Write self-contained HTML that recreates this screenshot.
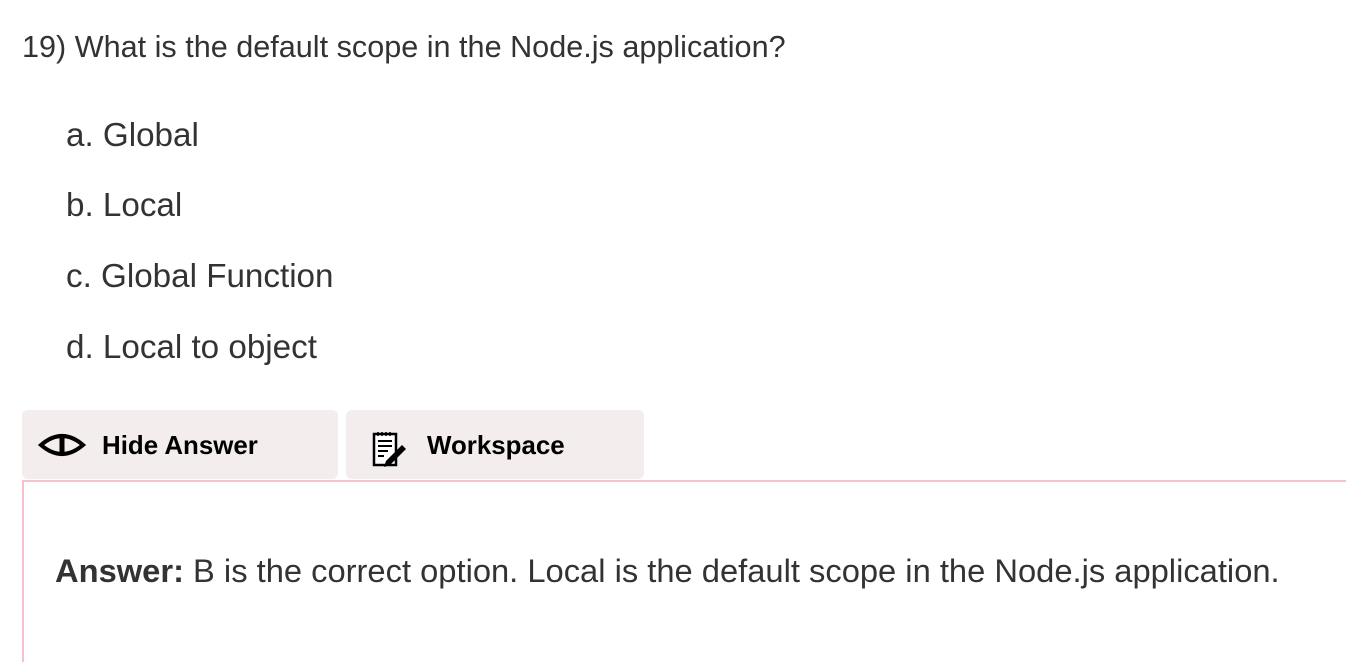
<!DOCTYPE html>
<html><head><meta charset="utf-8"><style>
body{margin:0;width:1346px;height:644px;overflow:hidden;background:#fff;font-family:"Liberation Sans",Arial,sans-serif;color:#333;position:relative}
.q{position:absolute;left:22px;top:30px;font-size:30.6px;white-space:nowrap}
.o{position:absolute;left:66px;font-size:33.2px;white-space:nowrap}
.btn{position:absolute;top:410px;height:69px;background:#f3eded;border-radius:6px;font-weight:bold;font-size:25.9px;color:#000}
.btn span{position:absolute;top:22px}
.box{position:absolute;left:22px;top:480px;width:1340px;height:180px;border-top:2px solid #f5c2cc;border-left:2px solid #f5c2cc}
.ans{position:absolute;left:55px;top:552px;font-size:32.7px;white-space:nowrap}
</style></head><body>
<div class="q">19) What is the default scope in the Node.js application?</div>
<div class="o" style="top:117px">a. Global</div>
<div class="o" style="top:187px">b. Local</div>
<div class="o" style="top:258px">c. Global Function</div>
<div class="o" style="top:329px">d. Local to object</div>
<div class="btn" style="left:22px;width:316px">
<svg style="position:absolute;left:16px;top:23px" width="48" height="24" viewBox="0 0 48 24"><path d="M3 12 Q24 -6 45 12 Q24 30 3 12Z" fill="none" stroke="#000" stroke-width="4"/><rect x="21.5" y="2" width="5" height="20" fill="#000"/></svg>
<span style="left:80px">Hide Answer</span></div>
<div class="btn" style="left:346px;width:298px">
<svg style="position:absolute;left:26px;top:20px" width="36" height="40" viewBox="0 0 36 40"><rect x="2" y="4" width="22" height="31" fill="#fff" stroke="#000" stroke-width="2.5"/><path d="M6 11h14M6 16h14M6 21h10M6 26h6" stroke="#000" stroke-width="2"/><path d="M6 2v4M10 2v4M14 2v4M18 2v4" stroke="#000" stroke-width="1.5"/><path d="M14 31l16-16 4 4-16 16-6 2z" fill="#000"/></svg>
<span style="left:81px">Workspace</span></div>
<div class="box"></div>
<div class="ans"><b>Answer:</b> B is the correct option. Local is the default scope in the Node.js application.</div>
</body></html>
